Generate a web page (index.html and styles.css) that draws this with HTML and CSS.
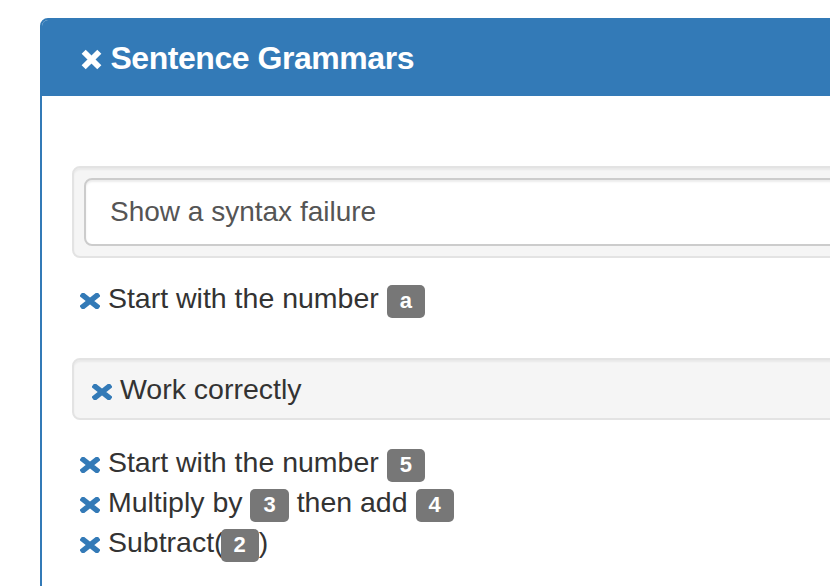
FILE: index.html
```html
<!DOCTYPE html>
<html>
<head>
<meta charset="utf-8">
<title>Sentence Grammars</title>
<link rel="stylesheet" href="styles.css">
</head>
<body>
<div class="panel">
  <div class="panel-heading">
    <h3 class="panel-title"><svg class="x-icon x-lg" viewBox="0 0 20 20"><path d="M4.5 4.5 L15.5 15.5 M15.5 4.5 L4.5 15.5"/></svg> Sentence Grammars</h3>
  </div>
  <div class="panel-body">
    <div class="well">
      <input class="form-control" type="text" value="Show a syntax failure">
    </div>
    <ul class="steps">
      <li><svg class="x-icon" viewBox="0 0 20 16"><path d="M3.2 2.6 L16.8 13.4 M16.8 2.6 L3.2 13.4"/></svg> Start with the number <span class="label">a</span></li>
    </ul>
    <div class="well well-title">
      <svg class="x-icon" viewBox="0 0 20 16"><path d="M3.2 2.6 L16.8 13.4 M16.8 2.6 L3.2 13.4"/></svg> Work correctly
    </div>
    <ul class="steps steps-2">
      <li><svg class="x-icon" viewBox="0 0 20 16"><path d="M3.2 2.6 L16.8 13.4 M16.8 2.6 L3.2 13.4"/></svg> Start with the number <span class="label">5</span></li>
      <li><svg class="x-icon" viewBox="0 0 20 16"><path d="M3.2 2.6 L16.8 13.4 M16.8 2.6 L3.2 13.4"/></svg> Multiply by <span class="label">3</span> then add <span class="label">4</span></li>
      <li><svg class="x-icon" viewBox="0 0 20 16"><path d="M3.2 2.6 L16.8 13.4 M16.8 2.6 L3.2 13.4"/></svg> Subtract(<span class="label label-tight">2</span>)</li>
    </ul>
  </div>
</div>
</body>
</html>
```
FILE: styles.css
```css
html, body {
  margin: 0;
  padding: 0;
  overflow: hidden;
  background: #fff;
}
body {
  font-family: "Liberation Sans", Arial, Helvetica, sans-serif;
  font-size: 28.5px;
  line-height: 40px;
  color: #333;
}
.panel {
  margin: 18px 0 0 40px;
  width: 1000px;
  border: 2px solid #337ab7;
  border-radius: 8px 8px 0 0;
  background: #fff;
}
.panel-heading {
  background: #337ab7;
  color: #fff;
  padding: 20px 39px;
  border-radius: 6px 6px 0 0;
}
.panel-title {
  margin: 0;
  font-size: 32px;
  line-height: 36px;
  font-weight: 700;
  letter-spacing: -0.45px;
}
.x-icon {
  width: 20px;
  height: 16px;
  vertical-align: -1px;
  fill: none;
  stroke: #337ab7;
  stroke-width: 5.4;
  stroke-linecap: square;
}
.x-lg {
  width: 21px;
  height: 21px;
  vertical-align: -1px;
  stroke: #fff;
  stroke-width: 5.5;
}
.panel-body {
  padding: 70px 30px 60px 30px;
}
.well {
  background: #f5f5f5;
  border: 2px solid #e3e3e3;
  border-radius: 8px;
  padding: 10px;
  box-shadow: inset 0 2px 2px rgba(0,0,0,0.05);
}
.form-control {
  display: block;
  box-sizing: border-box;
  width: 100%;
  height: 68px;
  padding: 12px 24px;
  font-family: inherit;
  font-size: 28px;
  color: #555;
  background: #fff;
  border: 2px solid #ccc;
  border-radius: 8px;
  box-shadow: inset 0 2px 2px rgba(0,0,0,0.075);
  outline: none;
}
.steps {
  list-style: none;
  margin: 20px 0 40px 0;
  padding: 0 0 0 8px;
}
.steps-2 {
  margin-top: 22px;
}
.well-title {
  padding: 9px 18px;
  line-height: 40px;
}
.label {
  display: inline-block;
  background: #777;
  color: #fff;
  font-size: 22px;
  font-weight: 700;
  line-height: 1;
  padding: 5px 13px 6px;
  border-radius: 5px;
  vertical-align: 0px;
}
.label-tight {
  margin-left: -3px;
}
```
